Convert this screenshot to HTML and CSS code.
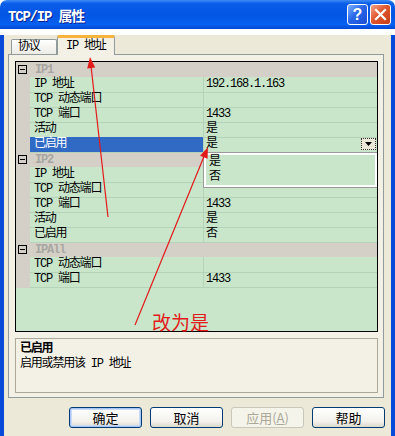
FILE: index.html
```html
<!DOCTYPE html>
<html lang="zh-CN">
<head>
  <meta charset="UTF-8" />
  <title>TCP/IP 属性</title>
  <link rel="stylesheet" href="styles.css">
</head>
<body>

  <div class="window">
    <div class="titlebar">
      <span class="title">TCP/IP 属性</span>
      <div class="title-buttons">
        <span class="tb-btn help">?</span>
        <span class="tb-btn close">
          <svg width="13" height="13" viewBox="0 0 13 13">
            <path d="M2 2 L11 11 M11 2 L2 11" stroke="#fff" stroke-width="2.2" stroke-linecap="square"/>
          </svg>
        </span>
      </div>
    </div>

    <div class="frame">
      <div class="tabs">
        <div class="tab">协议</div>
        <div class="tab active">IP 地址</div>
      </div>

      <div class="page">
        <div class="grid">
          <div class="row head"><div class="gutter"><span class="minus"></span></div><div class="head-name">IP1</div></div>
          <div class="row"><div class="gutter"></div><div class="name">IP 地址</div><div class="value">192.168.1.163</div></div>
          <div class="row"><div class="gutter"></div><div class="name">TCP 动态端口</div><div class="value"></div></div>
          <div class="row"><div class="gutter"></div><div class="name">TCP 端口</div><div class="value">1433</div></div>
          <div class="row"><div class="gutter"></div><div class="name">活动</div><div class="value">是</div></div>
          <div class="row selected">
            <div class="gutter"></div>
            <div class="name">已启用</div>
            <div class="value">是
              <span class="drop-btn">
                <svg width="7" height="4" viewBox="0 0 7 4"><path d="M0 0 H7 L3.5 4 Z" fill="#000"/></svg>
              </span>
              <div class="dropdown">
                <div class="drop-inner">
                  <div class="drop-item">是</div>
                  <div class="drop-item">否</div>
                </div>
              </div>
            </div>
          </div>
          <div class="row head"><div class="gutter"><span class="minus"></span></div><div class="head-name">IP2</div></div>
          <div class="row"><div class="gutter"></div><div class="name">IP 地址</div><div class="value"></div></div>
          <div class="row"><div class="gutter"></div><div class="name">TCP 动态端口</div><div class="value"></div></div>
          <div class="row"><div class="gutter"></div><div class="name">TCP 端口</div><div class="value">1433</div></div>
          <div class="row"><div class="gutter"></div><div class="name">活动</div><div class="value">是</div></div>
          <div class="row"><div class="gutter"></div><div class="name">已启用</div><div class="value">否</div></div>
          <div class="row head"><div class="gutter"><span class="minus"></span></div><div class="head-name">IPAll</div></div>
          <div class="row"><div class="gutter"></div><div class="name">TCP 动态端口</div><div class="value"></div></div>
          <div class="row"><div class="gutter"></div><div class="name">TCP 端口</div><div class="value">1433</div></div>
        </div>

        <div class="desc">
          <div class="desc-title">已启用</div>
          <div class="desc-text">启用或禁用该 IP 地址</div>
        </div>
      </div>

      <div class="buttons">
        <button class="btn default">确定</button>
        <button class="btn">取消</button>
        <button class="btn" disabled>应用(<u>A</u>)</button>
        <button class="btn">帮助</button>
      </div>
    </div>

    <!-- red annotation drawn over the dialog -->
    <svg class="marks" width="395" height="436" viewBox="0 0 395 436">
      <g stroke="#e21a1a" stroke-width="1.2" fill="none">
        <path d="M108 217 L91 66"/>
        <path d="M135 325 L205 154"/>
      </g>
      <g fill="#e21a1a">
        <path d="M90 57 L95.2 67.5 L87.2 68.4 Z"/>
        <path d="M208 147 L207.5 158.7 L200.1 155.7 Z"/>
      </g>
    </svg>
    <div class="note">改为是</div>
  </div>

</body>
</html>
```

FILE: styles.css
```css
* {
  box-sizing: border-box;
}

body {
  margin: 0;
  background: #fff;
  font-family: "Liberation Mono", "Noto Sans CJK SC", monospace;
  font-size: 12px;
  letter-spacing: -1.2px;
  color: #000;
}

.window {
  position: relative;
  width: 395px;
  height: 436px;
}

/* title bar */
.titlebar {
  height: 29px;
  display: flex;
  align-items: center;
  justify-content: space-between;
  padding: 0 4px 0 8px;
  border-radius: 7px 7px 0 0;
  background: linear-gradient(#3d8cf8 0%, #0a5ee8 12%, #0355e4 50%, #0860f0 85%, #0347d2 100%);
}

.title {
  color: #fff;
  font-weight: bold;
  font-size: 14px;
  text-shadow: 1px 1px #0a1e8c;
}

.title-buttons {
  display: flex;
  gap: 2px;
}

.tb-btn {
  width: 21px;
  height: 21px;
  border: 1px solid #fff;
  border-radius: 3px;
  display: flex;
  align-items: center;
  justify-content: center;
}

.tb-btn.help {
  background: linear-gradient(135deg, #7fb0ff, #2a66e8 45%, #1a4fd2);
  color: #fff;
  font-family: "Liberation Sans", sans-serif;
  font-weight: bold;
  font-size: 16px;
  letter-spacing: 0;
}

.tb-btn.close {
  background: linear-gradient(135deg, #f4a48a, #e0562e 45%, #c43e18);
}

/* window body */
.frame {
  height: 407px;
  background: #ece9d8;
  border-left: 4px solid #0749d8;
  border-right: 4px solid #0749d8;
  border-bottom: 4px solid #0640c8;
  padding-bottom: 4px;
}

.tabs {
  position: relative;
  z-index: 1;
  display: flex;
  align-items: flex-end;
  height: 20px;
  margin-top: 6px;
  margin-bottom: -1px;
  padding-left: 7px;
}

.tab {
  height: 15px;
  margin-bottom: 1px;
  padding: 0 6px;
  border: 1px solid #919b9c;
  border-bottom: none;
  border-radius: 2px 2px 0 0;
  background: linear-gradient(#fff, #ecebe5);
  line-height: 15px;
  width: 46px;
}

.tab.active {
  width: 58px;
  height: 20px;
  margin-bottom: 0;
  padding-left: 8px;
  border-top: 3px solid #f7b43c;
  background: #f3f1e6;
  line-height: 17px;
}

.page {
  margin: 0 7px 0 4px;
  height: 344px;
  padding: 6px 5px 4px 6px;
  border: 1px solid #919b9c;
  background: #f3f1e6;
}

/* property grid */
.grid {
  height: 271px;
  border: 1px solid #000;
  background: #c9e6cb;
}

.row {
  display: grid;
  grid-template-columns: 14px 173px 1fr;
  height: 15px;
  line-height: 15px;
}

.gutter {
  background: #d4d0c8;
  padding: 3px 0 0 2px;
}

.minus {
  display: block;
  position: relative;
  width: 9px;
  height: 9px;
  border: 1px solid #000;
}

.minus::after {
  content: "";
  position: absolute;
  left: 1px;
  top: 3px;
  width: 5px;
  height: 1px;
  background: #000;
}

.row.head {
  background: #d4d0c8;
}

.head-name {
  grid-column: 2 / 4;
  padding-left: 5px;
  color: #a8a6a0;
  font-weight: bold;
  line-height: 16px;
}

.name {
  padding-left: 4px;
  border-bottom: 1px solid #b5d3b8;
}

.value {
  position: relative;
  padding-left: 2px;
  border-left: 1px solid #b5d3b8;
  border-bottom: 1px solid #b5d3b8;
}

.row.selected .name {
  background: #316ac5;
  color: #fff;
}

.drop-btn {
  position: absolute;
  right: 1px;
  top: 1px;
  width: 15px;
  height: 12px;
  border: 1px dotted #333;
  background: #ece9d8;
  display: flex;
  align-items: center;
  justify-content: center;
}

.dropdown {
  position: absolute;
  left: -1px;
  right: 0;
  top: 15px;
  z-index: 2;
  height: 36px;
  border: 1px solid #9a9a9a;
  border-right: none;
  background: #fff;
}

.drop-inner {
  height: 100%;
  border: 2px solid #fff;
  background: #c9e6cb;
}

.drop-item {
  height: 15px;
  line-height: 15px;
  padding-left: 3px;
}

/* description */
.desc {
  height: 55px;
  margin-top: 6px;
  padding: 3px 4px;
  border: 1px solid #aca899;
  line-height: 15px;
}

.desc-title {
  font-weight: bold;
}

/* dialog buttons */
.buttons {
  display: flex;
  justify-content: flex-end;
  gap: 8px;
  margin-top: 9px;
  padding-right: 6px;
}

.btn {
  width: 73px;
  height: 21px;
  padding: 0;
  border: 1px solid #003c74;
  border-radius: 3px;
  background: linear-gradient(#ffffff, #f3f2ec 70%, #dcd8cc);
  font-family: "Noto Sans CJK SC", sans-serif;
  font-size: 13px;
  letter-spacing: 0;
  line-height: 19px;
  color: #000;
}

.btn.default {
  box-shadow: inset 0 0 0 1px #a8c6f5, inset 0 0 0 2px #c8dcfa;
}

.btn:disabled {
  border-color: #c9c7ba;
  background: #f5f4ea;
  color: #aca899;
}

/* annotation */
.marks {
  position: absolute;
  left: 0;
  top: 0;
  pointer-events: none;
  z-index: 5;
}

.note {
  position: absolute;
  left: 152px;
  top: 311px;
  z-index: 5;
  font-family: "Noto Sans CJK SC", sans-serif;
  font-size: 19px;
  line-height: 21px;
  letter-spacing: 0;
  color: #e21a1a;
}
```
